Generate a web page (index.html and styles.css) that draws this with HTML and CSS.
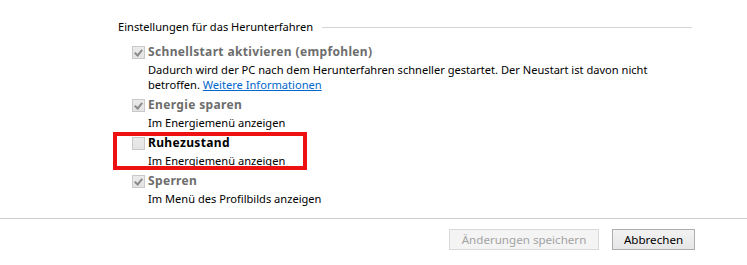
FILE: index.html
```html
<!DOCTYPE html>
<html lang="de">
<head>
<meta charset="utf-8">
<link rel="stylesheet" href="styles.css">
</head>
<body>
<div class="page">
  <div class="group">
    <div class="group-head">
      <span class="group-title">Einstellungen für das Herunterfahren</span>
      <span class="group-line"></span>
    </div>
    <div class="items">
      <div class="item">
        <div class="label disabled"><span class="cb checked"></span>Schnellstart aktivieren (empfohlen)</div>
        <div class="desc">Dadurch wird der PC nach dem Herunterfahren schneller gestartet. Der Neustart ist davon nicht<br>betroffen. <a class="link" href="#">Weitere Informationen</a></div>
      </div>
      <div class="item">
        <div class="label disabled"><span class="cb checked"></span>Energie sparen</div>
        <div class="desc">Im Energiemenü anzeigen</div>
      </div>
      <div class="item highlight">
        <div class="label"><span class="cb"></span>Ruhezustand</div>
        <div class="desc">Im Energiemenü anzeigen</div>
      </div>
      <div class="item">
        <div class="label disabled"><span class="cb checked"></span>Sperren</div>
        <div class="desc">Im Menü des Profilbilds anzeigen</div>
      </div>
    </div>
  </div>
  <div class="footer">
    <button class="btn btn-save" disabled>Änderungen speichern</button>
    <button class="btn btn-cancel">Abbrechen</button>
  </div>
</div>
</body>
</html>
```
FILE: styles.css
```css
html, body {
  margin: 0;
  padding: 0;
  background: #ffffff;
}
body {
  font-family: "Noto Sans", "Open Sans", sans-serif;
  font-size: 11.1px;
  color: #000;
  width: 747px;
  height: 265px;
  overflow: hidden;
}
.page {
  display: flex;
  flex-direction: column;
}
.group {
  padding: 18px 55px 0 118px;
  height: 206px;
  box-sizing: border-box;
}
.group-head {
  display: flex;
  align-items: center;
  gap: 9px;
  height: 18px;
}
.group-title {
  line-height: 18px;
  white-space: nowrap;
}
.group-line {
  flex: 1;
  height: 1px;
  background: #d5d5d5;
  margin-top: 1px;
}
.items {
  padding: 6px 0 0 14px;
}
.item {
  position: relative;
  margin-bottom: 3px;
}
.label {
  display: flex;
  align-items: center;
  line-height: 20px;
  font-weight: bold;
  font-size: 12px;
  letter-spacing: 0.35px;
  white-space: nowrap;
}
.label.disabled {
  color: #6d6d6d;
}
.desc {
  padding-left: 16px;
  line-height: 15px;
  white-space: nowrap;
}
.link {
  color: #0066cc;
  text-decoration: underline;
}
.cb {
  width: 11px;
  height: 11px;
  border: 1px solid #c9c9c9;
  background: linear-gradient(#ebebeb, #e3e3e3);
  margin-right: 3px;
  position: relative;
  flex: none;
}
.cb.checked::after {
  content: "";
  position: absolute;
  left: 3px;
  top: 1px;
  width: 3px;
  height: 6px;
  border: solid #8a8a8a;
  border-width: 0 2px 2px 0;
  transform: rotate(40deg);
}
.highlight::before {
  content: "";
  position: absolute;
  left: -19px;
  top: -1px;
  width: 194px;
  height: 38px;
  box-sizing: border-box;
  border: 4px solid #ee1111;
  pointer-events: none;
}
.footer {
  border-top: 1px solid #cccccc;
  display: flex;
  justify-content: flex-end;
  gap: 13px;
  padding: 10px 52px 0 0;
  margin-top: 12px;
}
.btn {
  font-family: inherit;
  font-size: 11.6px;
  height: 21px;
  padding: 0;
  border: 1px solid #adadad;
  background: linear-gradient(#f2f2f2, #e6e6e6);
  color: #000;
  line-height: 19px;
  white-space: nowrap;
}
.btn-save {
  width: 150px;
  border-color: #d9d9d9;
  background: #f4f4f4;
  color: #a3a3a3;
}
.btn-cancel {
  width: 83px;
}
```
